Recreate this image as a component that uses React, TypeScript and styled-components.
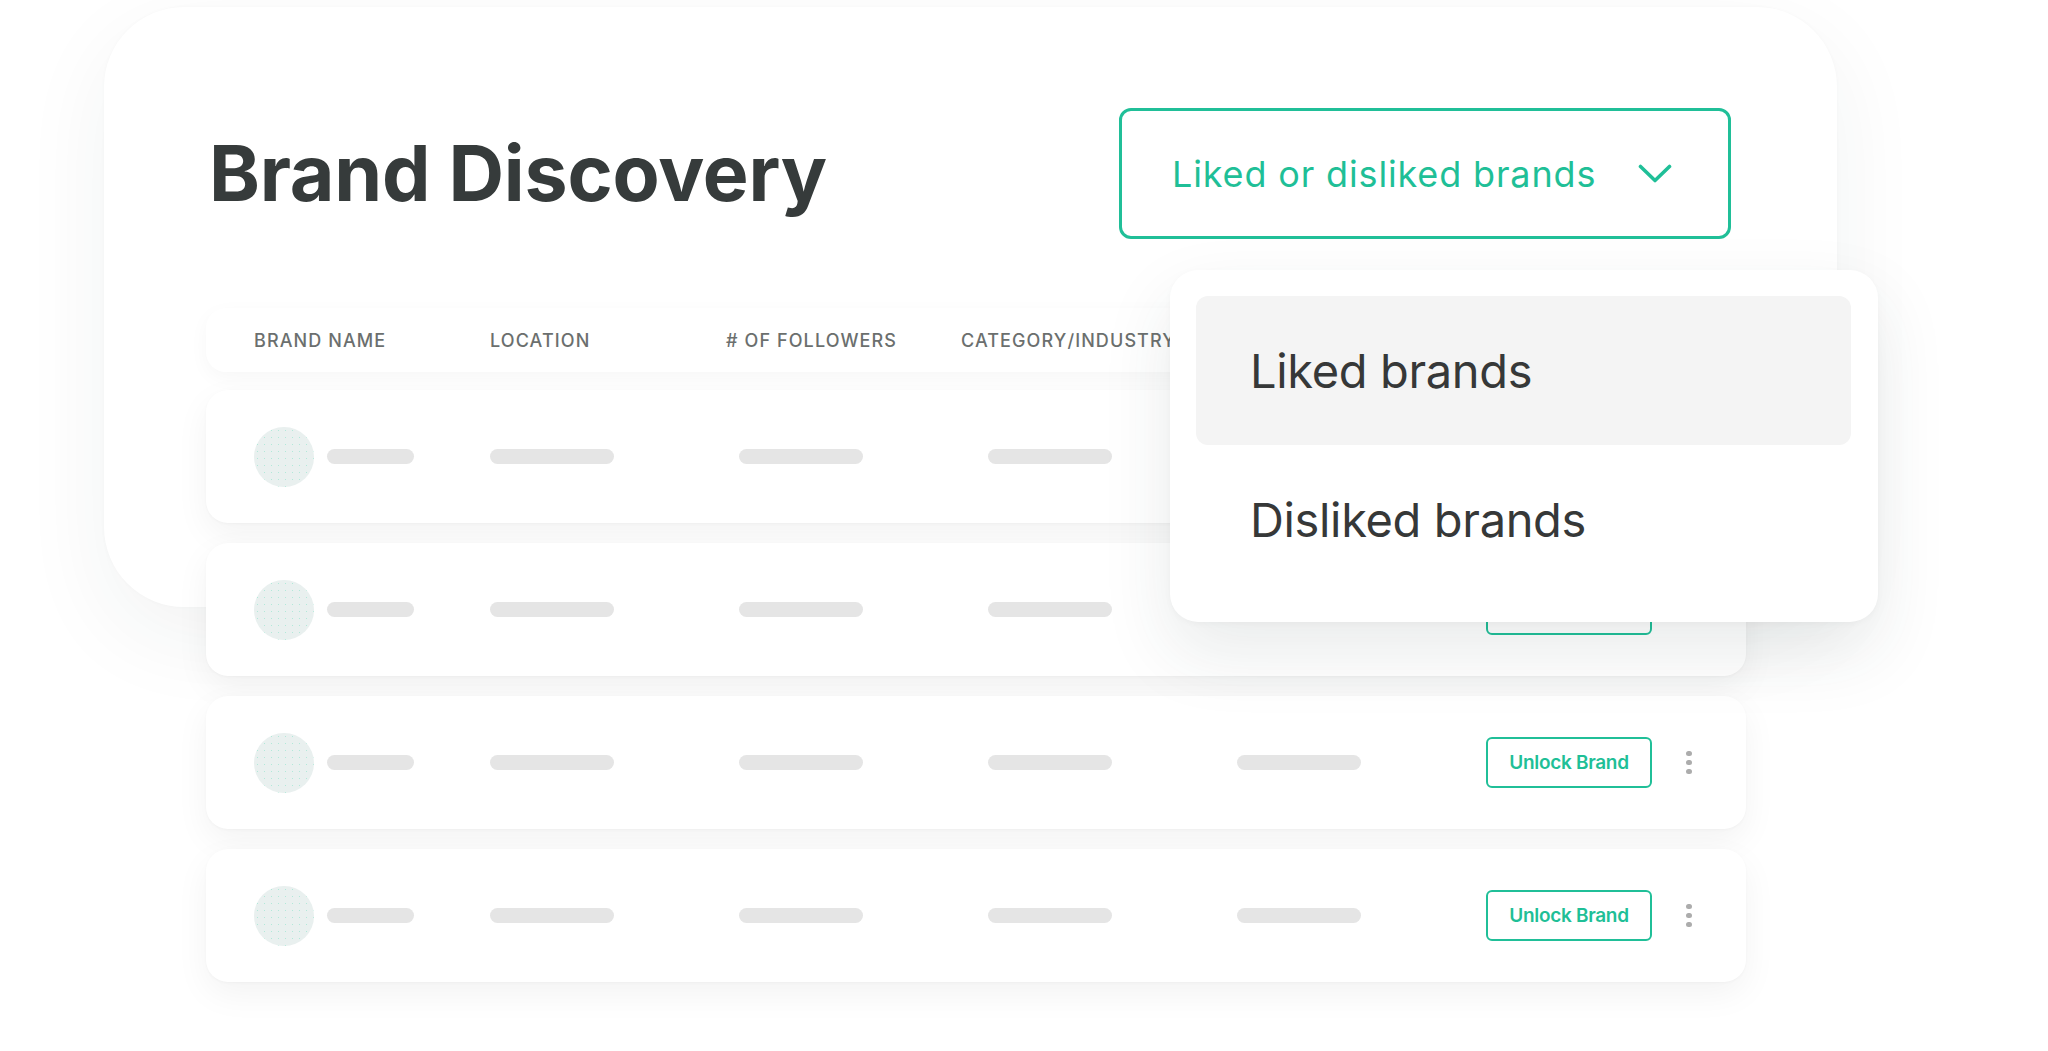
import React from 'react'
import styled, { createGlobalStyle } from 'styled-components'

const GlobalStyle = createGlobalStyle`
	html, body {
		margin: 0;
		padding: 0;
		background: #ffffff;
	}
	body {
		font-family: Inter, 'Noto Sans', 'Liberation Sans', sans-serif;
		color: #363a3a;
	}
	* {
		box-sizing: border-box;
	}
`

const teal = '#20bf98'

type RowType = {
	id: number
	locked: boolean
}

const rows: RowType[] = [
	{ id: 1, locked: true },
	{ id: 2, locked: true },
	{ id: 3, locked: true },
	{ id: 4, locked: true },
]

const columns = ['Brand name', 'Location', '# of followers', 'Category/Industry']

const menuItems = ['Liked brands', 'Disliked brands']

const Chevron = () => (
	<svg width="34" height="19" viewBox="0 0 34 19" fill="none">
		<polyline points="2.5,2.5 17,16.5 31.5,2.5" stroke={teal} strokeWidth="3.6" strokeLinecap="round" strokeLinejoin="round" />
	</svg>
)

const App = () => {
	return (
		<>
			<GlobalStyle />
			<Stage>
				<Card>
					<CardHeader>
						<Title>Brand Discovery</Title>
						<DropdownWrap>
							<DropdownButton>
								<DropdownLabel>Liked or disliked brands</DropdownLabel>
								<Chevron />
							</DropdownButton>
							<Menu>
								{menuItems.map((item, i) => (
									<MenuItem key={item} active={i === 0}>
										{item}
									</MenuItem>
								))}
							</Menu>
						</DropdownWrap>
					</CardHeader>
				</Card>

				<Table>
					<HeaderRow>
						{columns.map(col => (
							<HeaderCell key={col}>{col}</HeaderCell>
						))}
					</HeaderRow>
					{rows.map(row => (
						<Row key={row.id}>
							<BrandCell>
								<Avatar />
								<Bar width={87} />
							</BrandCell>
							<BarCell>
								<Bar width={124} />
							</BarCell>
							<BarCell>
								<Bar width={124} />
							</BarCell>
							<BarCell>
								<Bar width={124} />
							</BarCell>
							<BarCell>
								<Bar width={124} />
							</BarCell>
							{row.locked && <UnlockButton>Unlock Brand</UnlockButton>}
							<Dots>
								<Dot />
								<Dot />
								<Dot />
							</Dots>
						</Row>
					))}
				</Table>
			</Stage>
		</>
	)
}

export default App

const Stage = styled.div`
	width: 2048px;
	height: 1051px;
	padding: 7px 0 0 104px;
	display: grid;
	grid-template-columns: 102px 1540px 91px;
	grid-template-rows: 301px 299px auto;
	overflow: hidden;
`

const Card = styled.div`
	grid-column: 1 / 4;
	grid-row: 1 / 3;
	background: #ffffff;
	border-radius: 80px;
	box-shadow: 0 0 4px rgba(0, 0, 0, 0.025), 0 30px 90px rgba(40, 50, 50, 0.06);
`

const CardHeader = styled.div`
	display: flex;
	align-items: center;
	justify-content: space-between;
	padding: 101px 106px 0 105px;
`

const Title = styled.h1`
	margin: 0;
	font-family: Inter, 'Liberation Sans', sans-serif;
	font-size: 77px;
	font-weight: 700;
	letter-spacing: -0.2px;
	line-height: 1;
	color: #363b3b;
`

const DropdownWrap = styled.div`
	position: relative;
`

const DropdownButton = styled.div`
	width: 612px;
	height: 131px;
	display: flex;
	align-items: center;
	gap: 42px;
	padding: 0 50px;
	border: 3px solid ${teal};
	border-radius: 12px;
	background: #ffffff;
`

const DropdownLabel = styled.span`
	font-size: 36px;
	font-weight: 400;
	letter-spacing: 0.85px;
	color: #1fbf97;
	white-space: nowrap;
`

const Menu = styled.div`
	position: absolute;
	z-index: 10;
	left: 51px;
	top: 162px;
	width: 708px;
	padding: 26px 27px 28px 26px;
	display: flex;
	flex-direction: column;
	background: #ffffff;
	border-radius: 28px;
	box-shadow: 0 2px 6px rgba(0, 0, 0, 0.03), 0 30px 70px rgba(40, 60, 60, 0.1);
`

const MenuItem = styled.div<{ active?: boolean }>`
	height: 149px;
	display: flex;
	align-items: center;
	padding-left: 54px;
	border-radius: 12px;
	background: ${({ active }) => (active ? '#f4f4f4' : 'transparent')};
	font-size: 47px;
	font-weight: 400;
	letter-spacing: -0.35px;
	color: #363838;
`

const Table = styled.div`
	grid-column: 2 / 3;
	grid-row: 2 / 4;
	display: flex;
	flex-direction: column;
	gap: 20px;
`

const HeaderRow = styled.div`
	height: 64px;
	margin-bottom: -2px;
	display: grid;
	grid-template-columns: 236px 236px 235px 1fr;
	align-items: center;
	padding-left: 48px;
	background: #ffffff;
	border-radius: 20px;
	box-shadow: 0 6px 20px rgba(0, 0, 0, 0.035);
`

const HeaderCell = styled.div`
	font-size: 18px;
	font-weight: 500;
	letter-spacing: 1.1px;
	text-transform: uppercase;
	color: #6b6f6e;
	white-space: nowrap;
`

const Row = styled.div`
	height: 133px;
	display: flex;
	align-items: center;
	padding-left: 48px;
	background: #ffffff;
	border-radius: 22px;
	box-shadow: 0 1px 3px rgba(0, 0, 0, 0.03), 0 12px 34px rgba(0, 0, 0, 0.05);
`

const BrandCell = styled.div`
	width: 236px;
	display: flex;
	align-items: center;
	gap: 13px;
`

const BarCell = styled.div`
	width: 249px;
	display: flex;
	align-items: center;
`

const Avatar = styled.div`
	width: 60px;
	height: 60px;
	border-radius: 50%;
	background-color: #e9f0ef;
	background-image: radial-gradient(circle, rgba(110, 225, 190, 0.45) 0.5px, transparent 1px);
	background-size: 7px 7px;
	flex-shrink: 0;
`

const Bar = styled.div<{ width: number }>`
	width: ${({ width }) => width}px;
	height: 15px;
	border-radius: 8px;
	background: #e5e5e5;
`

const UnlockButton = styled.div`
	width: 166px;
	height: 51px;
	display: flex;
	align-items: center;
	justify-content: center;
	border: 2px solid ${teal};
	border-radius: 6px;
	font-size: 19px;
	font-weight: 600;
	letter-spacing: -0.3px;
	color: #1fbf97;
	background: #ffffff;
`

const Dots = styled.div`
	margin-left: 34px;
	display: flex;
	flex-direction: column;
	gap: 3.5px;
`

const Dot = styled.span`
	width: 5.5px;
	height: 5.5px;
	border-radius: 50%;
	background: #acacac;
`
